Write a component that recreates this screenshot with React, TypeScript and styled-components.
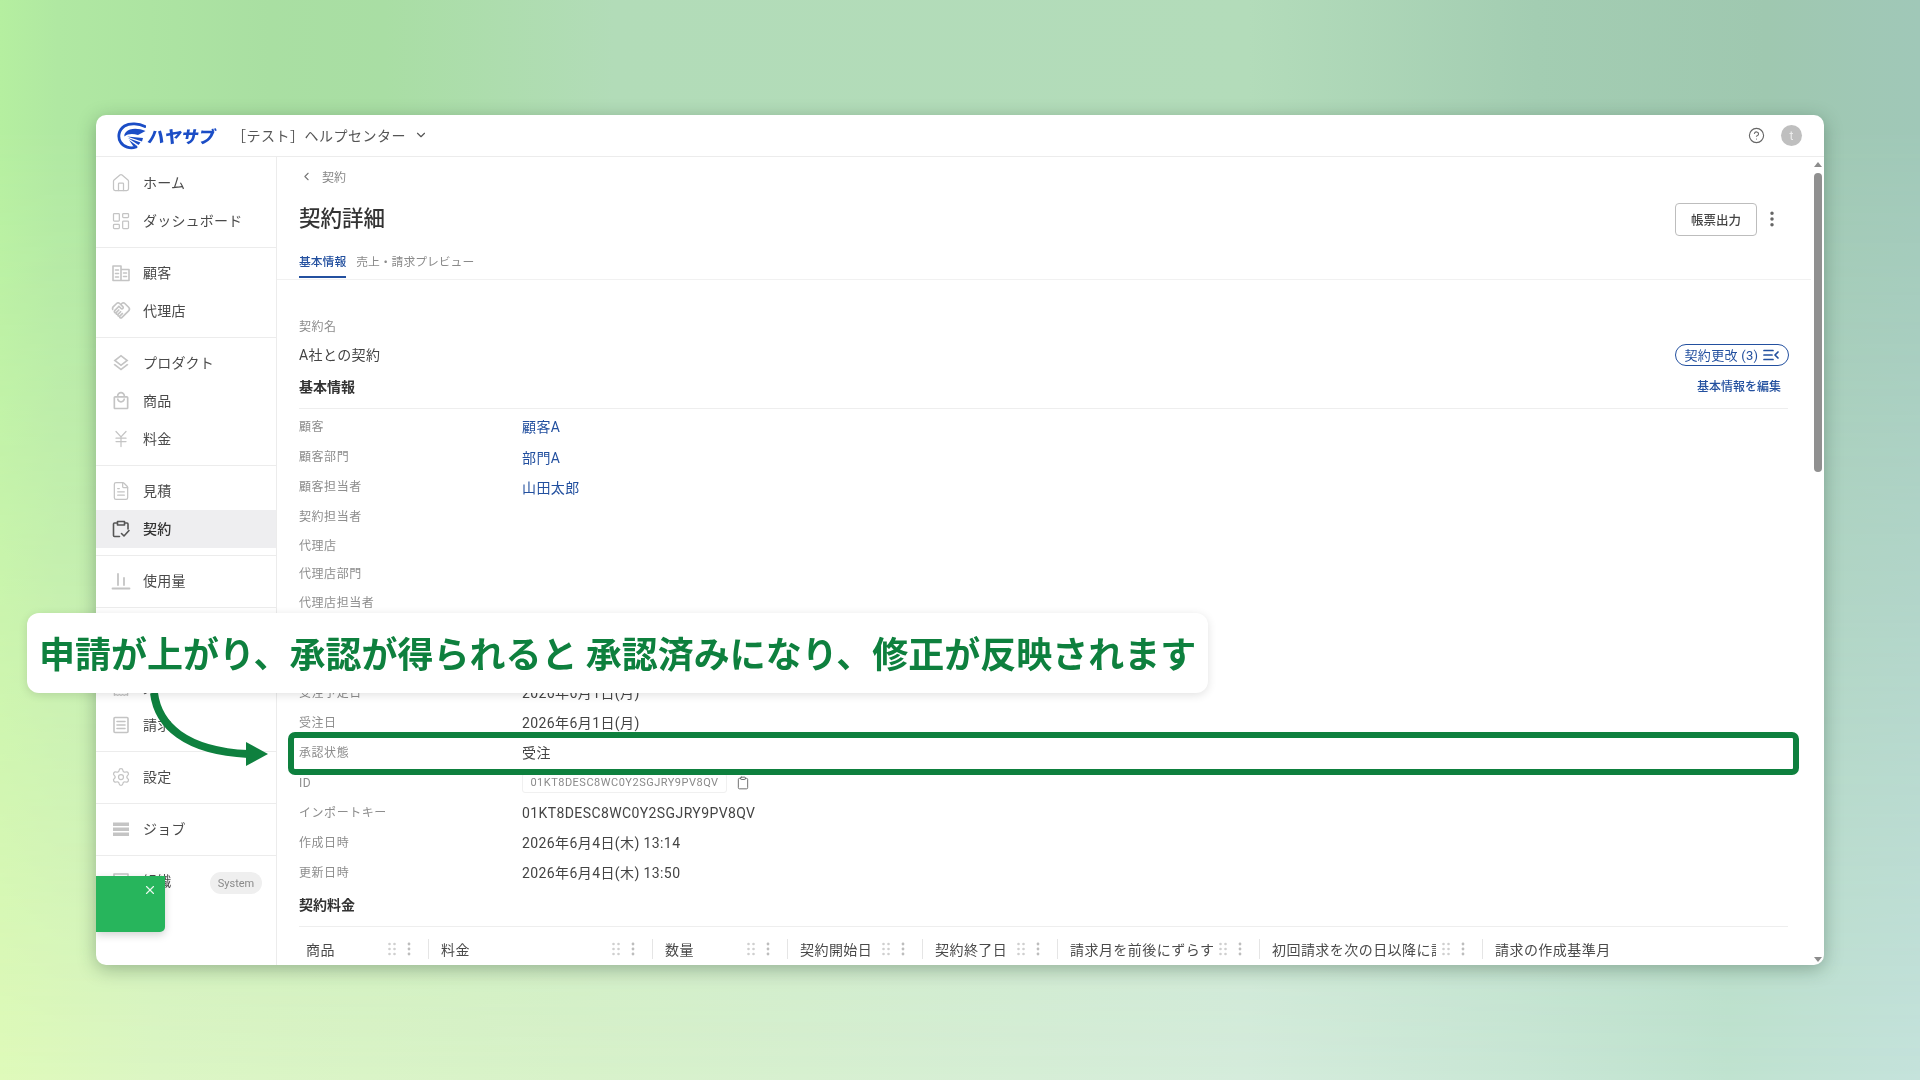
import React from "react";
import styled, { createGlobalStyle } from "styled-components";
import {
  House, LayoutDashboard, JapaneseYen, FileText,
  Settings, ChevronDown, ChevronLeft, CircleHelp, Clipboard, X, EllipsisVertical, Workflow, Receipt,
} from "lucide-react";
import { MdOutlineHandshake, MdOutlineLayers, MdOutlineLocalMall } from "react-icons/md";

const FONT = `Roboto, "Noto Sans CJK JP", "Noto Sans", sans-serif`;
const BLUE = "#23509f";
const GREEN = "#0e803e";

const Global = createGlobalStyle`
  html, body { margin: 0; padding: 0; }
  body { font-family: ${FONT}; background: #c0e2bc; }
  * { box-sizing: border-box; }
`;

const Page = styled.div`
  position: relative;
  width: 1920px;
  height: 1080px;
  overflow: hidden;
  padding: 115px 96px;
  filter: blur(0.35px);
  background: linear-gradient(90deg, #dffaba 0%, #dcf6c4 8%, #d8f2ca 30%, #d5ecdc 65%, #c0e3d0 90%, #c5e3dc 100%);
  &::before {
    content: "";
    position: absolute;
    inset: 0;
    background: linear-gradient(90deg, #b5efa0 0%, #b0e8a2 3%, #a9dfa2 14%, #a9dea4 20%, #b2dcb8 32%, #b3dcba 65%, #a3cdb2 80%, #9fc8b0 92%, #a0c8b8 100%);
    -webkit-mask-image: linear-gradient(180deg, #000 12%, rgba(0, 0, 0, 0) 100%);
    mask-image: linear-gradient(180deg, #000 12%, rgba(0, 0, 0, 0) 100%);
  }
`;

const Window = styled.div`
  position: relative;
  width: 1728px;
  height: 850px;
  background: #fff;
  border-radius: 10px;
  overflow: hidden;
  display: flex;
  flex-direction: column;
  box-shadow: 0 4px 18px rgba(30, 60, 40, 0.34);
`;

const TopBar = styled.header`
  height: 42px;
  flex: none;
  display: flex;
  align-items: center;
  padding: 0 22px 0 21px;
  border-bottom: 1px solid #ececec;
`;

const Logo = styled.div`
  display: flex;
  align-items: center;
  width: 115px;
  flex: none;
  color: #1b4dc6;
`;

const LogoText = styled.span`
  font-family: "Noto Sans CJK JP", sans-serif;
  font-weight: 900;
  font-size: 17px;
  line-height: 1;
  letter-spacing: 0;
  transform: skewX(-10deg);
  margin-left: 2px;
`;

const Tenant = styled.div`
  display: flex;
  align-items: center;
  font-size: 14px;
  color: #555;
  letter-spacing: 0.5px;
  gap: 8px;
  padding-bottom: 2px;
`;

const TopRight = styled.div`
  margin-left: auto;
  display: flex;
  align-items: center;
  gap: 16px;
  color: #666;
`;

const Avatar = styled.div`
  width: 21px;
  height: 21px;
  border-radius: 50%;
  background: #bfbfbf;
  color: #ececec;
  font-size: 12px;
  display: flex;
  align-items: center;
  justify-content: center;
`;

const Body = styled.div`
  flex: 1;
  display: flex;
  min-height: 0;
`;

const Sidebar = styled.nav`
  width: 181px;
  flex: none;
  border-right: 1px solid #ececec;
`;

const NavGroup = styled.div<{ $pad?: number }>`
  padding: ${(p) => (p.$pad ?? 6.5) - 1}px 0 ${(p) => (p.$pad ?? 6.5) + 1}px;
  border-bottom: 1px solid #ececec;
  &:first-child { padding-top: 6.5px; }
  &:last-child { border-bottom: none; }
`;

const NavItem = styled.div<{ $active?: boolean }>`
  height: 38px;
  display: flex;
  align-items: center;
  padding: 0 0 2px 15px;
  gap: 12px;
  font-size: 14px;
  letter-spacing: 0.2px;
  color: ${(p) => (p.$active ? "#333" : "#4a4a4a")};
  font-weight: ${(p) => (p.$active ? 500 : 400)};
  background: ${(p) => (p.$active ? "#eeeef0" : "transparent")};
`;

const NavIcon = styled.span<{ $active?: boolean }>`
  width: 20px;
  height: 20px;
  margin-top: 2px;
  flex: none;
  display: flex;
  align-items: center;
  justify-content: center;
  color: ${(p) => (p.$active ? "#555" : "#c4c4c4")};
`;

const SystemBadge = styled.span`
  margin: 7px 14px 0 auto;
  height: 22px;
  width: 52px;
  border-radius: 11px;
  background: #efefef;
  color: #8a8a8a;
  font-size: 11px;
  letter-spacing: 0;
  display: flex;
  align-items: center;
  justify-content: center;
`;

const Main = styled.main`
  flex: 1;
  min-width: 0;
  display: flex;
  flex-direction: column;
  overflow: hidden;
`;

const Head = styled.div`
  padding-left: 22px;
  padding-right: 29px;
  border-bottom: 1px solid #f1f1f1;
  flex: none;
`;

const Crumb = styled.div`
  margin-top: 10px;
  height: 18px;
  display: flex;
  align-items: center;
  gap: 9px;
  padding-left: 1px;
  font-size: 12px;
  color: #888;
  svg { color: #777; }
`;

const TitleRow = styled.div`
  margin-top: 18px;
  display: flex;
  align-items: center;
  justify-content: space-between;
`;

const Title = styled.h1`
  margin: 0;
  font-size: 21.5px;
  font-weight: 500;
  line-height: 31px;
  padding-bottom: 2px;
  color: #333;
`;

const TitleActions = styled.div`
  display: flex;
  align-items: center;
  gap: 5px;
  svg { color: #666; margin-bottom: 2px; }
`;

const OutlineButton = styled.button`
  width: 82px;
  height: 33px;
  background: #fff;
  border: 1px solid #bdbdbd;
  border-radius: 4px;
  font-family: ${FONT};
  font-size: 12.5px;
  font-weight: 500;
  color: #444;
`;

const Tabs = styled.div`
  margin-top: 17px;
  padding-bottom: 1px;
  display: flex;
  gap: 10px;
`;

const Tab = styled.div<{ $active?: boolean }>`
  font-size: 11.8px;
  line-height: 18px;
  padding-bottom: 5px;
  border-bottom: 2px solid ${(p) => (p.$active ? BLUE : "transparent")};
  color: ${(p) => (p.$active ? BLUE : "#8a8a8a")};
  font-weight: ${(p) => (p.$active ? 500 : 400)};
`;

const Content = styled.div`
  flex: 1;
  padding: 37px 23px 0 22px;
  overflow: hidden;
`;

const FieldLabel = styled.div`
  font-size: 12px;
  letter-spacing: 0.55px;
  line-height: 18px;
  padding-top: 1px;
  color: #8d8d8d;
`;

const NameRow = styled.div`
  margin-top: 9px;
  display: flex;
  align-items: center;
  justify-content: space-between;
  height: 20px;
`;

const NameText = styled.div`
  font-size: 14px;
  letter-spacing: 0.4px;
  color: #444;
  padding-bottom: 2px;
`;

const Pill = styled.div`
  width: 114px;
  height: 22px;
  margin-right: -1px;
  border: 1px solid ${BLUE};
  border-radius: 11px;
  color: ${BLUE};
  font-size: 13px;
  letter-spacing: 0.3px;
  padding-bottom: 1px;
  display: flex;
  align-items: center;
  justify-content: center;
  gap: 5px;
`;

const SectionHead = styled.div<{ $top: number }>`
  margin-top: ${(p) => p.$top}px;
  display: flex;
  align-items: center;
  justify-content: space-between;
  padding-bottom: 11px;
  border-bottom: 1px solid #eeeeee;
`;

const SectionTitle = styled.h2`
  margin: 0;
  font-size: 14px;
  line-height: 20px;
  font-weight: 700;
  color: #333;
`;

const EditLink = styled.span`
  font-size: 12px;
  font-weight: 500;
  color: ${BLUE};
  margin: 0 7px 3px 0;
`;

const Rows = styled.div`
  margin-top: 2px;
`;

const Row = styled.div<{ $h?: number }>`
  display: grid;
  grid-template-columns: 223px 1fr;
  align-items: center;
  height: ${(p) => p.$h ?? 30}px;
`;

const Value = styled.div`
  font-size: 14px;
  letter-spacing: 0.4px;
  line-height: 20px;
  color: #444;
  padding-top: 2px;
  display: flex;
  align-items: center;
  gap: 9px;
`;

const LinkValue = styled(Value)`
  color: ${BLUE};
`;

const IdChip = styled.span`
  height: 20px;
  width: 205px;
  border: 1px solid #f0f0f0;
  border-radius: 3px;
  font-size: 11px;
  letter-spacing: 0.5px;
  color: #8a8a8a;
  display: flex;
  align-items: center;
  justify-content: center;
`;

const TableHead = styled.div`
  margin-top: 3px;
  display: flex;
  height: 38px;
  align-items: flex-start;
  padding-top: 9px;
`;

const Col = styled.div<{ $w?: number; $first?: boolean }>`
  flex: ${(p) => (p.$w ? `0 0 ${p.$w}px` : "1")};
  min-width: 0;
  height: 20px;
  display: flex;
  align-items: center;
  gap: 6px;
  padding: 0 17px 0 ${(p) => (p.$first ? 7 : 12)}px;
  border-right: ${(p) => (p.$w ? "1px solid #e5e5e5" : "none")};
  font-size: 14px;
  letter-spacing: 0.45px;
  color: #4a4a4a;
  svg { flex: none; }
`;

const ColName = styled.span`
  flex: 1;
  min-width: 0;
  overflow: hidden;
  white-space: nowrap;
`;

const DragGrip = styled.svg`
  margin-right: 5px;
`;

const Track = styled.div`
  width: 13px;
  flex: none;
  display: flex;
  flex-direction: column;
  align-items: center;
  padding: 5px 0 3px;
`;

const ArrowUp = styled.div`
  border-left: 4px solid transparent;
  border-right: 4px solid transparent;
  border-bottom: 5px solid #8c8c8c;
`;

const ArrowDown = styled.div`
  margin-top: auto;
  border-left: 4px solid transparent;
  border-right: 4px solid transparent;
  border-top: 5px solid #8c8c8c;
`;

const Thumb = styled.div`
  margin-top: 6px;
  width: 8px;
  height: 299px;
  border-radius: 4px;
  background: #909090;
`;

const Toast = styled.div`
  position: absolute;
  left: 0;
  top: 761px;
  width: 69px;
  height: 56px;
  background: #27b55c;
  border-radius: 0 0 5px 0;
  box-shadow: 0 3px 8px rgba(0, 0, 0, 0.18);
  color: #e8f8ee;
  display: flex;
  justify-content: flex-end;
  padding: 7px 8px 0 0;
`;

const Callout = styled.div`
  position: absolute;
  left: 27px;
  top: 613px;
  width: 1181px;
  height: 80px;
  background: #fff;
  border-radius: 12px;
  box-shadow: 0 2px 10px rgba(0, 0, 0, 0.12);
  display: flex;
  align-items: center;
  padding: 0 0 2px 12px;
  font-family: "Noto Sans CJK JP", sans-serif;
  font-size: 36px;
  font-weight: 700;
  color: ${GREEN};
  white-space: pre;
`;

const HighlightBox = styled.div`
  position: absolute;
  left: 288px;
  top: 732px;
  width: 1511px;
  height: 43px;
  border: 6px solid ${GREEN};
  border-radius: 7px;
`;

const ArrowArt = styled.svg`
  position: absolute;
  left: 140px;
  top: 685px;
`;

const stroke = { fill: "none", stroke: "currentColor", strokeWidth: 1.6, strokeLinecap: "round" as const, strokeLinejoin: "round" as const };

const LogoMark = () => (
  <svg width="29" height="28" viewBox="0 0 29 28">
    <path d="M28 4.5C22 1.5 13 .5 7.5 4C1.5 8 .5 15 3.5 20C6.5 25 13 27 19 25" fill="none" stroke="currentColor" strokeWidth="2.8" strokeLinecap="round" />
    <path d="M28.5 9C21 6 13 6 9 10C7.5 11.5 7 13 7.5 14.5C11 11.5 16 11.5 21 13Z" fill="currentColor" />
    <path d="M10 14.5L26 16L25 19.5ZM11 16L23.5 20.5L21.5 23ZM12 18L19.5 23.5L16.5 24.5Z" fill="currentColor" />
  </svg>
);

const CustomerIcon = () => (
  <svg width="20" height="20" viewBox="0 0 20 20" {...stroke}>
    <path d="M2 3H10V17.5H2ZM10 6.5H18V17.5H10ZM4.5 7H7.5M4.5 10.5H7.5M4.5 14H7.5M12.5 10H15.5M12.5 13.5H15.5" />
  </svg>
);

const BarsIcon = () => (
  <svg width="20" height="20" viewBox="0 0 20 20" {...stroke}>
    <path d="M1.5 17.5H18.5M7 3V14M13 7V14" strokeWidth="1.8" />
  </svg>
);

const LinesIcon = () => (
  <svg width="20" height="20" viewBox="0 0 20 20" {...stroke}>
    <rect x="3" y="2.5" width="14" height="15" rx="1" />
    <path d="M6 6.5H14M6 10H14M6 13.5H14" />
  </svg>
);

const JobIcon = () => (
  <svg width="20" height="20" viewBox="0 0 20 20">
    <path d="M2 3.5H18V7H2ZM2 8.5H18V12H2ZM2 13.5H18V17H2Z" fill="currentColor" />
  </svg>
);

const OrgIcon = () => (
  <svg width="20" height="20" viewBox="0 0 20 20" {...stroke}>
    <rect x="3" y="3" width="14" height="14" />
  </svg>
);

const ContractIcon = () => (
  <svg width="20" height="20" viewBox="0 0 20 20" {...stroke}>
    <path d="M6.5 4H3.5a1 1 0 0 0-1 1V16.5a1 1 0 0 0 1 1H8.5M13.5 4H16a1 1 0 0 1 1 1V10M6.5 2.5H13.5V6H6.5ZM10.5 14.5L13 17L18 11.5" />
  </svg>
);

const ChangesIcon = () => (
  <svg width="16" height="12" viewBox="0 0 16 12" fill="none" stroke="currentColor" strokeWidth="1.7" strokeLinecap="round" strokeLinejoin="round">
    <path d="M1 1.5H10M1 6H9M1 10.5H10M15 3L12 6L15 9" />
  </svg>
);

const DragDots = () => (
  <DragGrip width="8" height="14" viewBox="0 0 8 14" fill="#cfcfcf">
    {[2, 7, 12].flatMap((y) => [1.5, 6.5].map((x) => <circle key={`${x}-${y}`} cx={x} cy={y} r="1.3" />))}
  </DragGrip>
);

const KebabDots = () => (
  <svg width="4" height="14" viewBox="0 0 4 14" fill="#bdbdbd">
    {[2, 7, 12].map((y) => <circle key={y} cx="2" cy={y} r="1.4" />)}
  </svg>
);

type NavEntry = { label: string; icon: React.ReactNode; active?: boolean; badge?: string };

const navGroups: { pad?: number; items: NavEntry[] }[] = [
  { items: [
    { label: "ホーム", icon: <House size={20} strokeWidth={1.5} /> },
    { label: "ダッシュボード", icon: <LayoutDashboard size={20} strokeWidth={1.5} /> },
  ] },
  { items: [
    { label: "顧客", icon: <CustomerIcon /> },
    { label: "代理店", icon: <MdOutlineHandshake size={23} /> },
  ] },
  { items: [
    { label: "プロダクト", icon: <MdOutlineLayers size={22} /> },
    { label: "商品", icon: <MdOutlineLocalMall size={22} /> },
    { label: "料金", icon: <JapaneseYen size={20} strokeWidth={1.5} /> },
  ] },
  { items: [
    { label: "見積", icon: <FileText size={20} strokeWidth={1.5} /> },
    { label: "契約", icon: <ContractIcon />, active: true },
  ] },
  { items: [{ label: "使用量", icon: <BarsIcon /> }] },
  { pad: 7.5, items: [{ label: "ワークフロー", icon: <Workflow size={20} strokeWidth={1.5} /> }] },
  { items: [
    { label: "売上", icon: <Receipt size={20} strokeWidth={1.5} /> },
    { label: "請求", icon: <LinesIcon /> },
  ] },
  { items: [{ label: "設定", icon: <Settings size={20} strokeWidth={1.5} /> }] },
  { items: [{ label: "ジョブ", icon: <JobIcon /> }] },
  { items: [{ label: "組織", icon: <OrgIcon />, badge: "System" }] },
];

const columns: { name: string; w?: number }[] = [
  { name: "商品", w: 130 },
  { name: "料金", w: 224 },
  { name: "数量", w: 135 },
  { name: "契約開始日", w: 135 },
  { name: "契約終了日", w: 135 },
  { name: "請求月を前後にずらす", w: 202 },
  { name: "初回請求を次の日以降に請求する", w: 223 },
  { name: "請求の作成基準月" },
];

const ID = "01KT8DESC8WC0Y2SGJRY9PV8QV";

export default function App() {
  return (
    <Page>
      <Global />
      <Window>
        <TopBar>
          <Logo>
            <LogoMark />
            <LogoText>ハヤサブ</LogoText>
          </Logo>
          <Tenant>
            ［テスト］ヘルプセンター
            <ChevronDown size={14} strokeWidth={2} />
          </Tenant>
          <TopRight>
            <CircleHelp size={17} strokeWidth={1.6} />
            <Avatar>t</Avatar>
          </TopRight>
        </TopBar>
        <Body>
          <Sidebar>
            {navGroups.map((group, i) => (
              <NavGroup key={i} $pad={group.pad}>
                {group.items.map((item) => (
                  <NavItem key={item.label} $active={item.active}>
                    <NavIcon $active={item.active}>{item.icon}</NavIcon>
                    {item.label}
                    {item.badge && <SystemBadge>{item.badge}</SystemBadge>}
                  </NavItem>
                ))}
              </NavGroup>
            ))}
          </Sidebar>
          <Main>
            <Head>
              <Crumb>
                <ChevronLeft size={13} strokeWidth={2} />
                契約
              </Crumb>
              <TitleRow>
                <Title>契約詳細</Title>
                <TitleActions>
                  <OutlineButton>帳票出力</OutlineButton>
                  <EllipsisVertical size={20} strokeWidth={2.2} />
                </TitleActions>
              </TitleRow>
              <Tabs>
                <Tab $active>基本情報</Tab>
                <Tab>売上・請求プレビュー</Tab>
              </Tabs>
            </Head>
            <Content>
              <FieldLabel>契約名</FieldLabel>
              <NameRow>
                <NameText>A社との契約</NameText>
                <Pill>
                  契約更改 (3)
                  <ChangesIcon />
                </Pill>
              </NameRow>
              <SectionHead $top={12}>
                <SectionTitle>基本情報</SectionTitle>
                <EditLink>基本情報を編集</EditLink>
              </SectionHead>
              <Rows>
                <Row><FieldLabel>顧客</FieldLabel><LinkValue>顧客A</LinkValue></Row>
                <Row $h={31}><FieldLabel>顧客部門</FieldLabel><LinkValue>部門A</LinkValue></Row>
                <Row $h={29}><FieldLabel>顧客担当者</FieldLabel><LinkValue>山田太郎</LinkValue></Row>
                <Row><FieldLabel>契約担当者</FieldLabel></Row>
                <Row $h={28}><FieldLabel>代理店</FieldLabel></Row>
                <Row $h={28}><FieldLabel>代理店部門</FieldLabel></Row>
                <Row><FieldLabel>代理店担当者</FieldLabel></Row>
                <Row><FieldLabel>契約開始日</FieldLabel></Row>
                <Row><FieldLabel>契約終了日</FieldLabel></Row>
                <Row><FieldLabel>受注予定日</FieldLabel><Value>2026年6月1日(月)</Value></Row>
                <Row><FieldLabel>受注日</FieldLabel><Value>2026年6月1日(月)</Value></Row>
                <Row><FieldLabel>承認状態</FieldLabel><Value>受注</Value></Row>
                <Row>
                  <FieldLabel>ID</FieldLabel>
                  <Value>
                    <IdChip>{ID}</IdChip>
                    <Clipboard size={14} strokeWidth={1.6} color="#666" />
                  </Value>
                </Row>
                <Row><FieldLabel>インポートキー</FieldLabel><Value>{ID}</Value></Row>
                <Row><FieldLabel>作成日時</FieldLabel><Value>2026年6月4日(木) 13:14</Value></Row>
                <Row><FieldLabel>更新日時</FieldLabel><Value>2026年6月4日(木) 13:50</Value></Row>
              </Rows>
              <SectionHead $top={8}>
                <SectionTitle>契約料金</SectionTitle>
              </SectionHead>
              <TableHead>
                {columns.map((c, i) => (
                  <Col key={c.name} $w={c.w} $first={i === 0}>
                    <ColName>{c.name}</ColName>
                    {c.w && <DragDots />}
                    {c.w && <KebabDots />}
                  </Col>
                ))}
              </TableHead>
            </Content>
          </Main>
          <Track>
            <ArrowUp />
            <Thumb />
            <ArrowDown />
          </Track>
        </Body>
        <Toast>
          <X size={14} strokeWidth={2} />
        </Toast>
      </Window>
      <ArrowArt width="140" height="90" viewBox="0 0 140 90">
        <path d="M14 8C18 40 45 66 108 69" fill="none" stroke={GREEN} strokeWidth="8" />
        <path d="M106 57L128 69L106 81Z" fill={GREEN} />
      </ArrowArt>
      <Callout>申請が上がり、承認が得られると 承認済みになり、修正が反映されます</Callout>
      <HighlightBox />
    </Page>
  );
}
